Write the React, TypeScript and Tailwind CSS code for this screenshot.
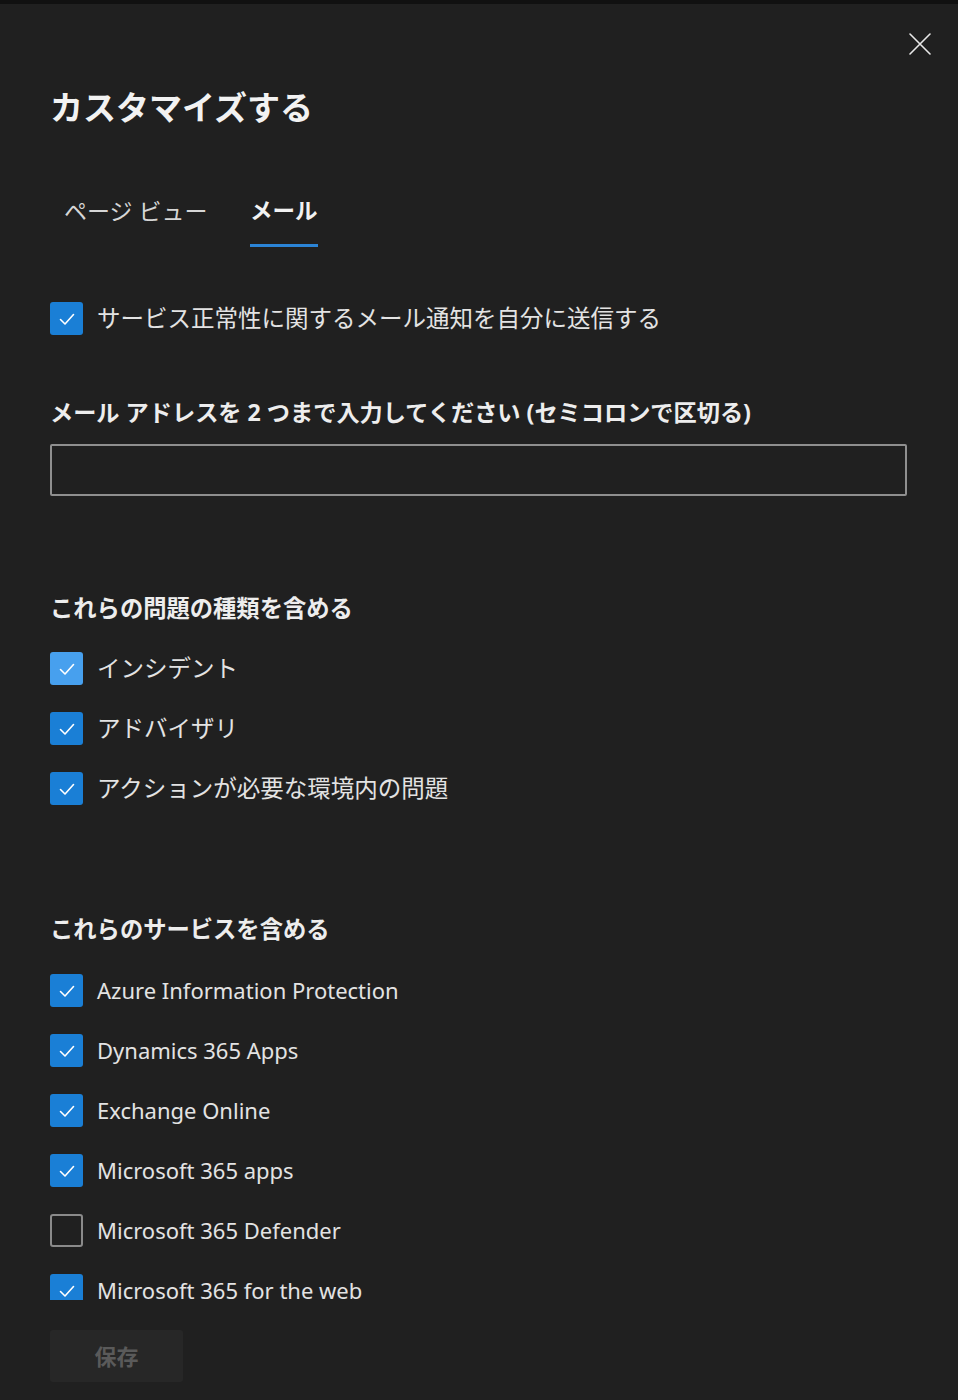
import React, { useState } from 'react';

const FONT = { fontFamily: '"Noto Sans", "Noto Sans CJK JP", sans-serif' };

// --- Checkbox glyph ---
function Box({ checked, hover }: { checked: boolean; hover?: boolean }) {
    if (!checked) {
        return <span className="block w-[33px] h-[33px] shrink-0 rounded-[3px] border-2 border-[#8a8a8a]" />;
    }
    return (
        <span className={`flex w-[33px] h-[33px] shrink-0 items-center justify-center rounded-[3px] ${hover ? 'bg-[#47a0ee]' : 'bg-[#1a7fd6]'}`}>
            <svg width="20" height="20" viewBox="0 0 20 20" fill="none">
                <path d="M3.5 10.5 L8 15 L16.5 5.5" stroke="#fff" strokeWidth="1.6" strokeLinecap="round" strokeLinejoin="round" />
            </svg>
        </span>
    );
}

function Row({ label, checked, hover, latin, className = '' }: { label: string; checked: boolean; hover?: boolean; latin?: boolean; className?: string }) {
    return (
        <div className={`flex items-center h-[33px] ${className}`}>
            <Box checked={checked} hover={hover} />
            <span className={`ml-[14px] leading-[33px] text-[#e3e3e3] whitespace-nowrap ${latin ? 'text-[22px]' : 'text-[23.5px]'}`}>{label}</span>
        </div>
    );
}

const issueTypes = [
    { label: 'インシデント', checked: true, hover: true },
    { label: 'アドバイザリ', checked: true },
    { label: 'アクションが必要な環境内の問題', checked: true },
];

const services = [
    { label: 'Azure Information Protection', checked: true },
    { label: 'Dynamics 365 Apps', checked: true },
    { label: 'Exchange Online', checked: true },
    { label: 'Microsoft 365 apps', checked: true },
    { label: 'Microsoft 365 Defender', checked: false },
    { label: 'Microsoft 365 for the web', checked: true },
    { label: 'Microsoft Intune', checked: true },
];

export default function App() {
    const [tab, setTab] = useState('mail');

    return (
        <div style={FONT} className="relative w-[958px] h-[1400px] overflow-hidden bg-[#202020] border-t-4 border-[#111111] text-white">
            {/* close */}
            <button className="absolute top-[29px] right-[27px] w-[22px] h-[22px]" aria-label="close">
                <svg width="22" height="22" viewBox="0 0 22 22" fill="none">
                    <path d="M1 1 L21 21 M21 1 L1 21" stroke="#e8e8e8" strokeWidth="1.6" strokeLinecap="round" />
                </svg>
            </button>

            {/* scrollable body */}
            <div className="h-[1296px] overflow-hidden pl-[50px] pr-[51px]">
                <h1 className="mt-[84px] h-[40px] text-[33px] leading-[40px] font-bold text-[#f2f2f2]">カスタマイズする</h1>

                {/* tabs */}
                <div className="mt-[62px] flex">
                    <button onClick={() => setTab('page')} className="w-[200px] pl-[14px] flex flex-col items-start">
                        <span className="mt-[6px] h-[30px] text-[23px] leading-[30px] text-[#d6d6d6] whitespace-nowrap">ページ ビュー</span>
                        {tab === 'page' && <span className="mt-[18px] h-[3px] w-full bg-[#2b84d6]" />}
                    </button>
                    <button onClick={() => setTab('mail')} className="flex flex-col items-stretch">
                        <span className="mt-[6px] h-[30px] text-[22.5px] leading-[30px] font-bold text-[#f2f2f2] whitespace-nowrap">メール</span>
                        {tab === 'mail' && <span className="mt-[18px] h-[3px] bg-[#2b84d6]" />}
                    </button>
                </div>

                <Row className="mt-[55px]" checked label="サービス正常性に関するメール通知を自分に送信する" />

                <div className="mt-[62px] h-[30px] text-[23.2px] leading-[30px] font-bold text-[#ededed] whitespace-nowrap">
                    メール アドレスを 2 つまで入力してください (セミコロンで区切る)
                </div>
                <input className="mt-[17px] block w-[857px] h-[52px] rounded-[2px] border-2 border-[#8f8f8f] bg-transparent px-3 text-[20px] outline-none" />

                <div className="mt-[97px] h-[30px] text-[23.3px] leading-[30px] font-bold text-[#ededed]">これらの問題の種類を含める</div>
                <div className="mt-[29px] flex flex-col gap-[27px]">
                    {issueTypes.map((t) => (
                        <Row key={t.label} label={t.label} checked={t.checked} hover={t.hover} />
                    ))}
                </div>

                <div className="mt-[109px] h-[30px] text-[23.3px] leading-[30px] font-bold text-[#ededed]">これらのサービスを含める</div>
                <div className="mt-[30px] flex flex-col gap-[27px]">
                    {services.map((s) => (
                        <Row key={s.label} label={s.label} checked={s.checked} latin />
                    ))}
                </div>
            </div>

            {/* footer */}
            <div className="pl-[50px] pt-[30px]">
                <button disabled className="w-[133px] h-[52px] rounded-[3px] bg-[#272727] text-[22px] leading-[52px] font-bold text-[#5a5a5a]">保存</button>
            </div>
        </div>
    );
}
